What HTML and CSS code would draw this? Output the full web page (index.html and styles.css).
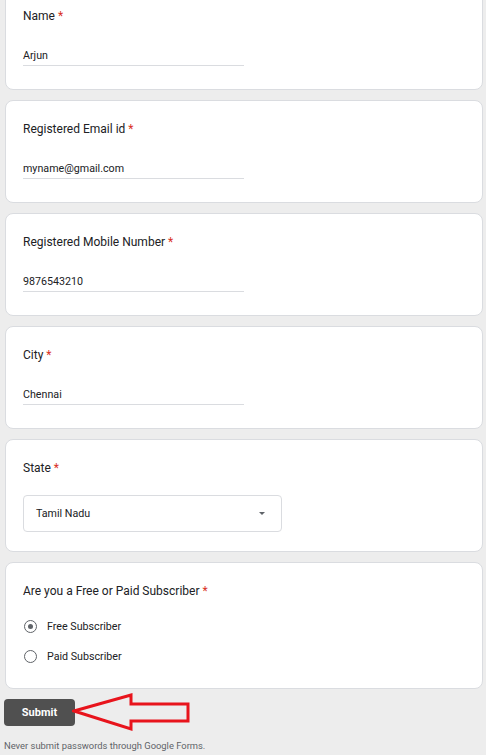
FILE: index.html
```html
<!DOCTYPE html>
<html>
<head>
<meta charset="utf-8">
<link rel="stylesheet" href="styles.css">
</head>
<body>
<div class="page">
  <div class="card first">
    <div class="label">Name <span class="req">*</span></div>
    <div class="input">Arjun</div>
  </div>
  <div class="card">
    <div class="label">Registered Email id <span class="req">*</span></div>
    <div class="input">myname@gmail.com</div>
  </div>
  <div class="card">
    <div class="label">Registered Mobile Number <span class="req">*</span></div>
    <div class="input">9876543210</div>
  </div>
  <div class="card">
    <div class="label">City <span class="req">*</span></div>
    <div class="input">Chennai</div>
  </div>
  <div class="card state">
    <div class="label">State <span class="req">*</span></div>
    <div class="select"><span>Tamil Nadu</span><span class="caret"></span></div>
  </div>
  <div class="card radios">
    <div class="label">Are you a Free or Paid Subscriber <span class="req">*</span></div>
    <div class="option"><span class="radio checked"></span>Free Subscriber</div>
    <div class="option"><span class="radio"></span>Paid Subscriber</div>
  </div>
  <div class="actions">
    <button class="submit">Submit</button>
    <svg class="arrow" width="130" height="40" viewBox="0 0 130 40">
      <polygon points="2,19 59,3 59,12 116,12 116,29 59,29 59,37" fill="none" stroke="#e8141c" stroke-width="3" stroke-linejoin="miter"/>
    </svg>
  </div>
  <div class="footer">Never submit passwords through Google Forms.</div>
</div>
</body>
</html>
```
FILE: styles.css
```css
html, body {
  margin: 0;
  padding: 0;
  background: #ededed;
  font-family: Roboto, "Liberation Sans", Arial, sans-serif;
  color: #202124;
  overflow: hidden;
}
.page {
  display: flex;
  flex-direction: column;
  padding-left: 5px;
}
.card {
  height: 101px;
  width: 441px;
  background: #fff;
  border: 1px solid #dadce0;
  border-radius: 8px;
  margin-bottom: 10px;
  padding: 0 18px 0 17px;
  box-sizing: content-box;
}
.card.first {
  margin-top: -13px;
}
.label {
  font-size: 12px;
  margin-top: 20px;
  line-height: 16px;
}
.req {
  color: #d93025;
}
.input {
  margin-top: 25px;
  width: 221px;
  font-size: 10.7px;
  line-height: 13px;
  padding-bottom: 3px;
  border-bottom: 1px solid #dadce0;
}
.card.state {
  height: 111px;
}
.select {
  margin-top: 19px;
  height: 35px;
  border: 1px solid #dadce0;
  border-radius: 4px;
  display: flex;
  align-items: center;
  justify-content: space-between;
  padding: 0 16px 0 12px;
  box-sizing: content-box;
  width: 229px;
  font-size: 10.7px;
}
.caret {
  width: 0;
  height: 0;
  border-left: 3.5px solid transparent;
  border-right: 3.5px solid transparent;
  border-top: 3.5px solid #5f6368;
}
.card.radios {
  height: 125px;
}
.card.radios .label {
  margin-bottom: 12px;
}
.option {
  display: flex;
  align-items: center;
  height: 30px;
  font-size: 10.7px;
}
.radio {
  width: 11px;
  height: 11px;
  border: 1.5px solid #5f6368;
  border-radius: 50%;
  margin-left: 1px;
  margin-right: 10px;
  display: flex;
  align-items: center;
  justify-content: center;
}
.radio.checked::after {
  content: "";
  width: 5px;
  height: 5px;
  border-radius: 50%;
  background: #5f6368;
}
.actions {
  position: relative;
  margin-left: -1px;
  height: 28px;
}
.submit {
  width: 71px;
  height: 27px;
  background: #505050;
  color: #fff;
  border: none;
  border-radius: 4px;
  font-family: Roboto, "Liberation Sans", Arial, sans-serif;
  font-weight: bold;
  font-size: 11px;
  padding: 0;
}
.arrow {
  position: absolute;
  left: 68px;
  top: -7px;
}
.footer {
  margin-left: -1px;
  margin-top: 13px;
  font-size: 9.4px;
  color: #5f6368;
}
```
